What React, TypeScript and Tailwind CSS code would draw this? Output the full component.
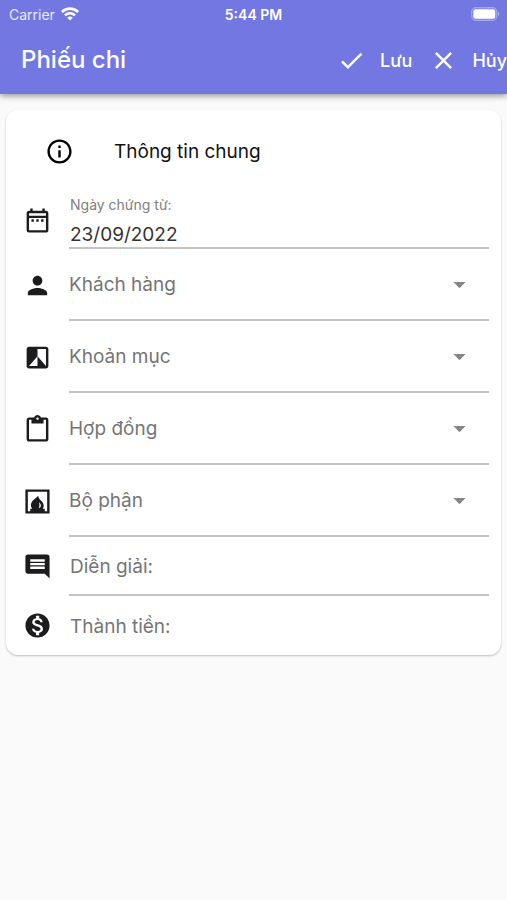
import type { ReactNode } from "react"
import {
  MdArrowDropDown,
  MdCheck,
  MdClose,
  MdComment,
  MdContentPaste,
  MdFilterBAndW,
  MdInfoOutline,
  MdMonetizationOn,
  MdOutlineDateRange,
  MdPerson,
} from "react-icons/md"

function WifiIcon() {
  return (
    <svg viewBox="0 0 18 14" className="h-[14px] w-[18px]" fill="none" stroke="currentColor" strokeWidth="2.6" aria-hidden="true">
      <path d="M.9 5a11.500 11.500 0 0 1 16.200 0" />
      <path d="M4 8.300a7.100 7.100 0 0 1 10 0" />
      <path d="M9 13.600 6.200 10.800a4 4 0 0 1 5.600 0z" fill="currentColor" stroke="none" />
    </svg>
  )
}

function BatteryIcon() {
  return (
    <svg viewBox="0 0 29 14" className="h-[14px] w-[29px]" aria-hidden="true">
      <rect x="0.75" y="0.75" width="25" height="12.500" rx="4" fill="none" stroke="#fff" strokeWidth="1.300" strokeOpacity="0.35" />
      <rect x="2.300" y="2.300" width="22" height="9.400" rx="2.200" fill="#fff" />
      <path d="M27 4.800c1.600.7 1.600 3.700 0 4.400z" fill="#fff" fillOpacity="0.45" />
    </svg>
  )
}

function FireplaceIcon() {
  return (
    <svg viewBox="0 0 24 24" className="size-[29px]" fill="currentColor" aria-hidden="true">
      <path fillRule="evenodd" d="M2 2h20v20H2zM4 4v16h2v-2h1.600C6.300 16.400 6.200 14 7.400 12.200 8.500 10.500 10.600 9.500 12.600 7.200c.1 1.800 1.200 2.900 2.500 4.200 2.200 2.100 2.500 4.600 1.300 6.600H18v2h2V4z" />
      <path d="M13.200 12.600c2.200 1.700 2.200 4-.2 5 .8-1.700.7-3.300.2-5z" fill="#fff" />
    </svg>
  )
}

function StatusBar() {
  return (
    <div className="grid h-7 grid-cols-3 items-center px-[7px] text-[14px]">
      <div className="flex items-center gap-[6px] pl-[2px] text-white/85">
        <span>Carrier</span>
        <span className="text-white">
          <WifiIcon />
        </span>
      </div>
      <span className="text-center font-semibold">5:44 PM</span>
      <div className="flex justify-end">
        <BatteryIcon />
      </div>
    </div>
  )
}

function ToolbarButton({ icon, text }: { icon: ReactNode; text: string }) {
  return (
    <button type="button" className="flex shrink-0 items-center gap-[14px] text-[18px] font-medium">
      {icon}
      {text}
    </button>
  )
}

function Row({ icon, children, className = "" }: { icon: ReactNode; children: ReactNode; className?: string }) {
  return (
    <div className={`flex items-stretch gap-[17px] ${className}`}>
      <div className="flex w-[29px] shrink-0 items-center justify-center text-[29px] text-[#1c1c1e]">{icon}</div>
      {children}
    </div>
  )
}

const LINE = "border-b-2 border-[#c4c4c4]"

function SelectRow({ icon, label }: { icon: ReactNode; label: string }) {
  return (
    <Row icon={icon} className="h-[72px]">
      <div className={`relative min-w-0 flex-1 ${LINE}`}>
        <select
          aria-label={label}
          defaultValue=""
          className="h-full w-full appearance-none bg-transparent pt-[3px] text-[19px] text-[#757575] outline-none"
        >
          <option value="">{label}</option>
        </select>
        <MdArrowDropDown className="pointer-events-none absolute inset-y-0 right-[15px] my-auto text-[29px] text-[#858585]" />
      </div>
    </Row>
  )
}

function TextRow({ icon, label, line = false }: { icon: ReactNode; label: string; line?: boolean }) {
  return (
    <Row icon={icon} className="h-[59px]">
      <input
        type="text"
        aria-label={label}
        placeholder={label}
        className={`min-w-0 flex-1 bg-transparent pt-[3px] pl-px text-[19px] outline-none placeholder:text-[#757575] ${line ? LINE : ""}`}
      />
    </Row>
  )
}

export default function App() {
  return (
    <div className="min-h-screen bg-[#fafafa] font-['Inter','Liberation_Sans',sans-serif] text-[#1c1c1e]">
      <header className="bg-[#7277e2] text-white shadow-[0_2px_6px_rgba(0,0,0,0.4)]">
        <StatusBar />
        <div className="flex h-[66px] items-center pb-[2px] pl-[21px]">
          <h1 className="flex-1 text-[24px] font-medium">Phiếu chi</h1>
          <div className="flex gap-[17px]">
            <ToolbarButton icon={<MdCheck className="text-[29px]" />} text="Lưu" />
            <ToolbarButton icon={<MdClose className="text-[29px]" />} text="Hủy" />
          </div>
        </div>
      </header>

      <main className="px-[6px] pt-4">
        <form className="rounded-xl bg-white pr-3 pl-[17px] shadow-[0_1px_2px_rgba(0,0,0,0.25)]">
          <div className="flex h-[82px] items-center gap-10 pl-[22px]">
            <MdInfoOutline className="text-[29px] text-black" />
            <h2 className="pt-[3px] text-[19px] text-[#111111]">Thông tin chung</h2>
          </div>

          <Row icon={<MdOutlineDateRange />} className="h-[57px]">
            <div className={`flex min-w-0 flex-1 flex-col pl-px ${LINE}`}>
              <label htmlFor="voucher-date" className="pt-[3px] text-[14px] leading-5 text-[#808080]">
                Ngày chứng từ:
              </label>
              <input
                id="voucher-date"
                type="text"
                defaultValue="23/09/2022"
                className="w-full flex-1 bg-transparent pt-[6px] text-[19px] text-[#333333] outline-none"
              />
            </div>
          </Row>
          <SelectRow icon={<MdPerson />} label="Khách hàng" />
          <SelectRow icon={<MdFilterBAndW />} label="Khoản mục" />
          <SelectRow icon={<MdContentPaste />} label="Hợp đồng" />
          <SelectRow icon={<FireplaceIcon />} label="Bộ phận" />
          <TextRow icon={<MdComment />} label="Diễn giải:" line />
          <TextRow icon={<MdMonetizationOn />} label="Thành tiền:" />
        </form>
      </main>
    </div>
  )
}
